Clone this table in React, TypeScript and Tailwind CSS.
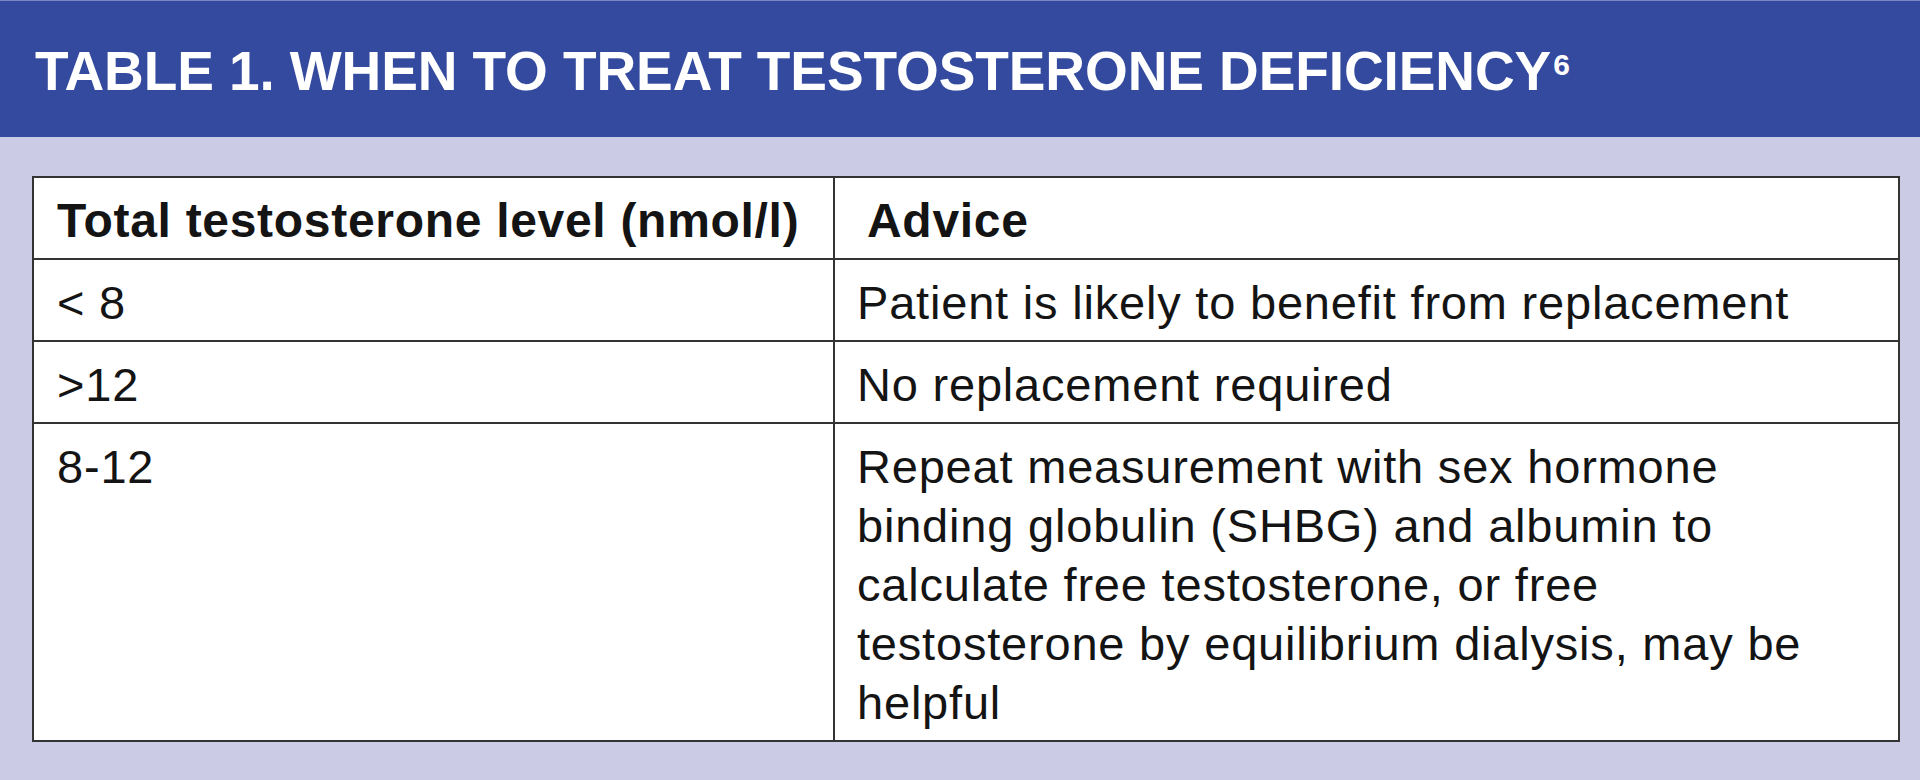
import React from "react";

const rows = [
  { level: "< 8", advice: ["Patient is likely to benefit from replacement"] },
  { level: ">12", advice: ["No replacement required"] },
  {
    level: "8-12",
    advice: [
      "Repeat measurement with sex hormone",
      "binding globulin (SHBG) and albumin to",
      "calculate free testosterone, or free",
      "testosterone by equilibrium dialysis, may be",
      "helpful",
    ],
  },
];

export default function App() {
  return (
    <div className="min-h-[780px] w-full bg-[#cbcbe6] font-['Liberation_Sans',Arial,sans-serif]">
      {/* Title bar */}
      <div className="h-[137px] border-t border-[#7b86c2] bg-[#334a9e] pl-[35px] pt-[43px]">
        <h1 className="text-[55px] font-bold leading-none tracking-[-0.1px] text-white">
          TABLE 1. WHEN TO TREAT TESTOSTERONE DEFICIENCY
          <span className="ml-[2px] inline-block pt-[6px] align-top text-[30px] leading-none">6</span>
        </h1>
      </div>

      {/* Table */}
      <div className="pl-[32px] pr-[20px] pt-[39px]">
        <table className="w-full table-fixed border-collapse border-2 border-[#333333] bg-white text-[#141414]">
          <colgroup>
            <col className="w-[801px]" />
            <col />
          </colgroup>
          <thead>
            <tr>
              <th className="border-2 border-[#333333] pb-[8px] pl-[23px] pt-[13px] text-left text-[48px] font-bold leading-[59px] tracking-[0.7px]">
                Total testosterone level (nmol/l)
              </th>
              <th className="border-2 border-[#333333] pb-[8px] pl-[32px] pt-[13px] text-left text-[48px] font-bold leading-[59px] tracking-[0.7px]">
                Advice
              </th>
            </tr>
          </thead>
          <tbody>
            {rows.map((r) => (
              <tr key={r.level}>
                <td className="border-2 border-[#333333] pb-[8px] pl-[23px] pt-[13px] align-top text-[47px] leading-[59px] tracking-[0.8px]">
                  {r.level}
                </td>
                <td className="border-2 border-[#333333] pb-[8px] pl-[22px] pt-[13px] align-top text-[47px] leading-[59px] tracking-[0.8px]">
                  {r.advice.map((line, i) => (
                    <div key={i} className="whitespace-nowrap">
                      {line}
                    </div>
                  ))}
                </td>
              </tr>
            ))}
          </tbody>
        </table>
      </div>
    </div>
  );
}
